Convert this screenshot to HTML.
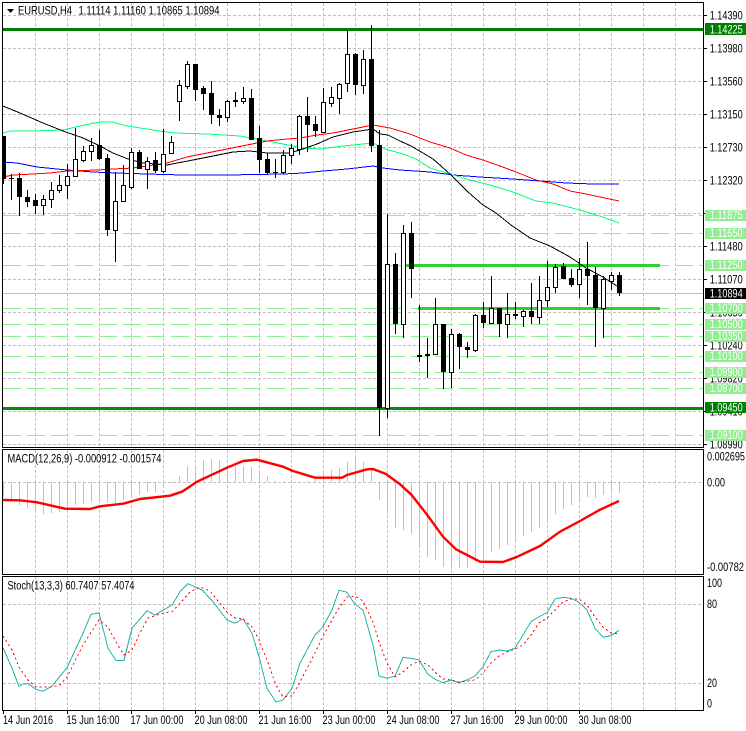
<!DOCTYPE html>
<html lang="en">
<head>
<meta charset="utf-8">
<title>EURUSD,H4</title>
<style>
html,body{margin:0;padding:0;background:#fff;width:746px;height:731px;overflow:hidden}
svg{display:block}
text{font-family:"Liberation Sans",Arial,sans-serif;font-size:11.5px;fill:#000}
.w text{fill:#fff}
.c{shape-rendering:crispEdges}
</style>
</head>
<body>
<svg width="746" height="731" viewBox="0 0 746 731" xmlns="http://www.w3.org/2000/svg">
<rect width="746" height="731" fill="#fff"/>

<!-- grid -->
<g fill="none" stroke="#c0c0c0" stroke-width="1" stroke-dasharray="3 2">
<path d="M35.5 3V447M67.5 3V447M99.5 3V447M131.5 3V447M163.5 3V447M195.5 3V447M227.5 3V447M259.5 3V447M291.5 3V447M323.5 3V447M355.5 3V447M387.5 3V447M419.5 3V447M451.5 3V447M483.5 3V447M515.5 3V447M547.5 3V447M579.5 3V447M611.5 3V447M643.5 3V447M675.5 3V447"/>
<path d="M35.5 450V574M67.5 450V574M99.5 450V574M131.5 450V574M163.5 450V574M195.5 450V574M227.5 450V574M259.5 450V574M291.5 450V574M323.5 450V574M355.5 450V574M387.5 450V574M419.5 450V574M451.5 450V574M483.5 450V574M515.5 450V574M547.5 450V574M579.5 450V574M611.5 450V574M643.5 450V574M675.5 450V574"/>
<path d="M35.5 577V710M67.5 577V710M99.5 577V710M131.5 577V710M163.5 577V710M195.5 577V710M227.5 577V710M259.5 577V710M291.5 577V710M323.5 577V710M355.5 577V710M387.5 577V710M419.5 577V710M451.5 577V710M483.5 577V710M515.5 577V710M547.5 577V710M579.5 577V710M611.5 577V710M643.5 577V710M675.5 577V710"/>
<path d="M3 15.5H703M3 48.5H703M3 81.5H703M3 114.5H703M3 147.5H703M3 180.5H703M3 213.5H703M3 246.5H703M3 279.5H703M3 312.5H703M3 345.5H703M3 378.5H703M3 411.5H703M3 444.5H703"/>
<path d="M3 482.5H703M3 604.5H703M3 683.5H703"/>
</g>

<!-- dashed light-green levels -->
<path fill="none" stroke="#90ee90" stroke-width="1" stroke-dasharray="18 6" d="M3 215.5H703M3 233.5H703M3 265.5H703M3 308.5H703M3 324.5H703M3 336.5H703M3 356.5H703M3 372.5H703M3 388.5H703M3 435.5H703"/>
<!-- current price -->
<path fill="none" stroke="#c0c0c0" d="M3 293.5H703"/>
<!-- thick segments -->
<path fill="none" stroke="#32cd32" stroke-width="3" d="M404 265.5H660M418 308.5H660"/>
<path fill="none" stroke="#008000" stroke-width="3" d="M3 29.5H704"/>
<path fill="none" stroke="#0a8a0a" stroke-width="3" d="M3 408.5H704"/>

<!-- moving averages -->
<g fill="none" class="c">
<polyline stroke="#0000ff" points="3,162 17,163 37,167 67,170 93,172 117,173 147,174 183,175 227,175 283,174 303,173 323,171 347,169 373,166 383,168 400,170 430,172 453,175 480,177 513,179 540,181 566,183 593,184 619,184"/>
<polyline stroke="#00ff7f" points="3,133 10,131 33,131 63,130 80,126 100,122 112,122 127,126 147,129 173,133 207,134 240,136 257,139 283,144 303,148 320,149 343,146 373,143 385,149 403,154 416,159 430,168 450,174 470,180 490,185 513,192 536,201 553,203 576,209 600,216 619,223"/>
<polyline stroke="#ff0000" points="3,177 13,175 33,174 50,173 67,171 97,170 113,169 133,168 147,166 167,163 187,157 207,153 227,149 247,145 267,141 287,139 300,138 317,135 333,133 353,129 373,125 390,128 410,134 430,142 450,148 466,155 483,160 500,166 516,172 536,180 553,184 570,191 586,194 600,197 619,201"/>
<polyline stroke="#000" points="3,106 20,113 43,123 63,131 83,138 100,146 113,153 128,159 143,163 167,165 193,160 213,156 233,152 250,151 267,153 290,153 303,149 317,144 333,137 353,132 373,129 380,134 388,135 400,141 411,146 423,153 433,159 441,166 451,175 468,192 483,205 496,213 511,225 530,238 550,246 570,257 586,268 603,277 620,288"/>
</g>

<!-- candles: wicks -->
<path fill="none" stroke="#000" d="M3.5 136V184M11.5 174V200M19.5 173V216M27.5 190V207M35.5 194V214M43.5 195V215M51.5 182V208M59.5 175V193M67.5 164V199M75.5 128V177M83.5 146V162M91.5 138V161M99.5 130V160M107.5 154V236M115.5 172V262M123.5 165V202M131.5 148V189M139.5 150V169M147.5 157V189M155.5 152V173M163.5 129V173M171.5 136V153M179.5 80V121M187.5 61V89M195.5 64V101M203.5 86V110M211.5 81V124M219.5 109V126M227.5 100V122M235.5 92V107M243.5 87V104M251.5 89V140M259.5 126V173M267.5 153V174M275.5 159V178M283.5 150V174M291.5 144V164M299.5 115V155M307.5 97V152M315.5 116V137M323.5 88V132M331.5 87V107M339.5 83V114M347.5 30V92M355.5 53V95M363.5 50V94M371.5 25V152M379.5 130V436M387.5 214V418M395.5 253V334M403.5 225V338M411.5 222V298M419.5 305V362M427.5 338V378M435.5 298V355M443.5 324V389M451.5 329V388M459.5 333V369M467.5 342V358M475.5 314V352M483.5 302V328M491.5 276V323M499.5 308V337M507.5 293V338M515.5 302V319M523.5 310V327M531.5 283V324M539.5 276V324M547.5 261V307M555.5 264V293M563.5 263V279M571.5 269V287M579.5 258V298M587.5 242V305M595.5 267V347M603.5 276V338M611.5 272V290M619.5 272V296"/>
<!-- candles: bearish bodies -->
<path fill="#000" d="M3 136h3v43h-3zM9 178h5v1h-5zM17 178h5v19h-5zM25 197h5v5h-5zM33 200h5v6h-5zM97 145h5v14h-5zM105 158h5v72h-5zM137 152h5v17h-5zM153 160h5v11h-5zM193 64h5v26h-5zM201 88h5v6h-5zM209 93h5v22h-5zM217 115h5v3h-5zM233 100h5v2h-5zM249 98h5v42h-5zM257 138h5v22h-5zM265 159h5v14h-5zM273 172h5v1h-5zM305 116h5v9h-5zM313 124h5v7h-5zM353 54h5v31h-5zM369 59h5v87h-5zM377 145h5v263h-5zM393 264h5v60h-5zM409 233h5v36h-5zM417 355h5v2h-5zM425 354h5v2h-5zM441 324h5v48h-5zM457 334h5v13h-5zM465 347h5v3h-5zM481 315h5v8h-5zM497 308h5v16h-5zM513 314h5v2h-5zM529 311h5v6h-5zM561 266h5v13h-5zM569 278h5v7h-5zM585 269h5v7h-5zM593 275h5v33h-5zM617 275h5v18h-5z"/>
<!-- candles: bullish bodies -->
<path fill="#fff" stroke="#000" d="M41.5 199.5h4v6h-4zM49.5 190.5h4v9h-4zM57.5 185.5h4v5h-4zM65.5 176.5h4v9h-4zM73.5 159.5h4v17h-4zM81.5 151.5h4v9h-4zM89.5 145.5h4v6h-4zM113.5 201.5h4v29h-4zM121.5 185.5h4v16h-4zM129.5 152.5h4v35h-4zM145.5 161.5h4v8h-4zM161.5 154.5h4v17h-4zM169.5 142.5h4v11h-4zM177.5 85.5h4v16h-4zM185.5 64.5h4v22h-4zM225.5 101.5h4v16h-4zM241.5 98.5h4v3h-4zM281.5 155.5h4v17h-4zM289.5 148.5h4v7h-4zM297.5 116.5h4v33h-4zM321.5 102.5h4v30h-4zM329.5 97.5h4v6h-4zM337.5 84.5h4v14h-4zM345.5 54.5h4v29h-4zM361.5 59.5h4v26h-4zM385.5 264.5h4v144h-4zM401.5 233.5h4v91h-4zM433.5 324.5h4v30h-4zM449.5 334.5h4v38h-4zM473.5 315.5h4v35h-4zM489.5 308.5h4v15h-4zM505.5 314.5h4v10h-4zM521.5 311.5h4v5h-4zM537.5 300.5h4v17h-4zM545.5 287.5h4v13h-4zM553.5 267.5h4v20h-4zM577.5 269.5h4v15h-4zM601.5 279.5h4v29h-4zM609.5 275.5h4v6h-4z"/>

<!-- MACD histogram -->
<path fill="none" stroke="#c0c0c0" d="M3.5 482V497M11.5 482V499M19.5 482V505M27.5 482V508M35.5 482V513M43.5 482V514M51.5 482V513M59.5 482V512M67.5 482V509M75.5 482V505M83.5 482V504M91.5 482V502M99.5 482V500M107.5 482V502M115.5 482V503M123.5 482V500M131.5 482V498M139.5 482V495M147.5 482V492M155.5 482V492M163.5 482V487M171.5 482V483M179.5 482V476M187.5 482V466M195.5 482V466M203.5 482V460M211.5 482V459M219.5 482V460M227.5 482V465M235.5 482V466M243.5 482V466M251.5 482V467M259.5 482V472M267.5 482V476M275.5 482V481M283.5 482V481M307.5 482V481M315.5 482V478M323.5 482V472M331.5 482V470M339.5 482V468M347.5 482V462M355.5 482V457M363.5 482V462M371.5 482V468M379.5 482V500M387.5 482V514M395.5 482V528M403.5 482V530M411.5 482V534M419.5 482V545M427.5 482V557M435.5 482V560M443.5 482V567M451.5 482V569M459.5 482V568M467.5 482V568M475.5 482V562M483.5 482V562M491.5 482V552M499.5 482V549M507.5 482V545M515.5 482V542M523.5 482V536M531.5 482V532M539.5 482V528M547.5 482V520M555.5 482V514M563.5 482V509M571.5 482V505M579.5 482V500M587.5 482V497M595.5 482V498M603.5 482V495M611.5 482V494M619.5 482V493"/>
<!-- MACD signal -->
<polyline fill="none" stroke="#ff0000" stroke-width="2.4" stroke-linejoin="round" points="3,500 20,500.3 37,502.3 50,505.3 65,508.7 90,509 100,506.3 123,503.7 140,499 170,495.7 182,491.7 197,481.7 227,467.7 243,461 257,459.7 283,466.7 293,471 315,477.7 342,477.7 347,475 367,469.3 373,469 386,474 400,484.3 411,494.3 426,513.3 443,536.7 456,549.3 480,561.7 503,562 516,557.3 540,546 560,531.7 580,521 600,509.7 619,501"/>

<!-- Stochastic -->
<polyline class="c" fill="none" stroke="#20b2aa" points="3,647.7 12,668.3 19,686.3 23,684 28,683.7 36,689.3 43,691.3 52,686 67,667.7 83,633.3 91,614.3 99,613 108,648.3 116,660.3 124,660.3 132,628.3 147,610.7 155,615 172,605 180,591.7 188,583.7 202,590 213,601.7 227,620 235,623.3 243,618.7 252,633.3 259,656.7 267,688.3 276,702 283,700 292,688.3 300,663.3 315,635 323,626.7 332,610 339,590.3 347,592.3 355,604.3 363,610 373,645 379,676 387,678.3 395,676 403,657.3 411,658.3 419,660 428,674.3 435,679.3 443,682.7 451,680 459,682.7 467,680 475,676 483,666.7 491,651.7 499,650 507,651 515,648.3 531,621.7 539,616.7 547,612.7 555,599 563,597.3 571,598.3 579,602.3 587,610 595,628.3 603,637.3 611,635.7 619,630.3"/>
<polyline class="c" fill="none" stroke="#ff0000" stroke-dasharray="2 3" points="3,636 12,650 19,667 28,680 36,687 43,687 52,687 60,685 67,677 83,645 99,620 108,627 116,642 124,655 132,650 140,633 148,618 157,615 173,611 190,592 200,587 210,591 227,612 235,618 243,619 252,627 259,640 267,660 276,685 283,697 292,696 300,682 315,653 323,636 332,620 339,608 347,597 355,596 363,601 373,622 379,642 387,663 395,677 403,672 411,665 419,661 428,665 435,672 443,679 451,680 459,682 467,681 475,680 483,673 491,663 499,656 507,652 515,649 523,645 531,635 539,623 547,618 555,610 563,602 571,599 579,599 587,605 595,617 603,627 611,633 619,634"/>

<!-- frames -->
<g fill="none" stroke="#000">
<path d="M2.5 2.5H703.5V447.5H2.5ZM2.5 449.5H703.5V574.5H2.5ZM2.5 576.5H703.5V710.5H2.5Z"/>
<path d="M704 15.5h3M704 48.5h3M704 81.5h3M704 114.5h3M704 147.5h3M704 180.5h3M704 213.5h3M704 246.5h3M704 279.5h3M704 312.5h3M704 345.5h3M704 378.5h3M704 411.5h3M704 444.5h3"/>
<path d="M3.5 711v3M67.5 711v3M131.5 711v3M195.5 711v3M259.5 711v3M323.5 711v3M387.5 711v3M451.5 711v3M515.5 711v3M579.5 711v3"/>
</g>

<!-- header -->
<path d="M7 9h7l-3.5 4z" fill="#000"/>
<text x="18" y="14.5" textLength="54" lengthAdjust="spacingAndGlyphs" style="font-size:12px">EURUSD,H4</text>
<text x="78.5" y="14.5" textLength="141" lengthAdjust="spacingAndGlyphs">1.11114 1.11160 1.10865 1.10894</text>
<text x="7.5" y="462.5" textLength="154" lengthAdjust="spacingAndGlyphs">MACD(12,26,9) -0.000912 -0.001574</text>
<text x="7.5" y="589.5" textLength="127" lengthAdjust="spacingAndGlyphs">Stoch(13,3,3) 60.7407 57.4074</text>

<!-- axis labels -->
<g>
<text x="709.7" y="19.5" textLength="33" lengthAdjust="spacingAndGlyphs">1.14390</text>
<text x="709.7" y="52.5" textLength="33" lengthAdjust="spacingAndGlyphs">1.13980</text>
<text x="709.7" y="85.5" textLength="33" lengthAdjust="spacingAndGlyphs">1.13560</text>
<text x="709.7" y="118.5" textLength="33" lengthAdjust="spacingAndGlyphs">1.13150</text>
<text x="709.7" y="151.5" textLength="33" lengthAdjust="spacingAndGlyphs">1.12730</text>
<text x="709.7" y="184.5" textLength="33" lengthAdjust="spacingAndGlyphs">1.12320</text>
<text x="709.7" y="250.5" textLength="33" lengthAdjust="spacingAndGlyphs">1.11480</text>
<text x="709.7" y="283.5" textLength="33" lengthAdjust="spacingAndGlyphs">1.11070</text>
<text x="709.7" y="316.5" textLength="33" lengthAdjust="spacingAndGlyphs">1.10650</text>
<text x="709.7" y="349.5" textLength="33" lengthAdjust="spacingAndGlyphs">1.10240</text>
<text x="709.7" y="382.5" textLength="33" lengthAdjust="spacingAndGlyphs">1.09820</text>
<text x="709.7" y="415.5" textLength="33" lengthAdjust="spacingAndGlyphs">1.09410</text>
<text x="709.7" y="448.5" textLength="33" lengthAdjust="spacingAndGlyphs">1.08990</text>
<text x="707" y="460.5" textLength="38" lengthAdjust="spacingAndGlyphs">0.002695</text>
<text x="707" y="486.5" textLength="18" lengthAdjust="spacingAndGlyphs">0.00</text>
<text x="707" y="571" textLength="37" lengthAdjust="spacingAndGlyphs">-0.00782</text>
<text x="707" y="587" textLength="15" lengthAdjust="spacingAndGlyphs">100</text>
<text x="707" y="608" textLength="10" lengthAdjust="spacingAndGlyphs">80</text>
<text x="707" y="687" textLength="10" lengthAdjust="spacingAndGlyphs">20</text>
<text x="707" y="707.5" textLength="5" lengthAdjust="spacingAndGlyphs">0</text>
</g>

<!-- level label boxes -->
<g fill="#90ee90">
<rect x="705" y="210" width="41" height="11"/>
<rect x="705" y="228" width="41" height="11"/>
<rect x="705" y="260" width="41" height="11"/>
<rect x="705" y="303" width="41" height="11"/>
<rect x="705" y="319" width="41" height="11"/>
<rect x="705" y="331" width="41" height="11"/>
<rect x="705" y="351" width="41" height="11"/>
<rect x="705" y="367" width="41" height="11"/>
<rect x="705" y="383" width="41" height="11"/>
<rect x="705" y="430" width="41" height="11"/>
</g>
<rect x="705" y="23" width="41" height="12" fill="#008000"/>
<rect x="705" y="402" width="41" height="11" fill="#008000"/>
<rect x="705" y="288" width="41" height="11" fill="#000"/>
<g class="w">
<text x="709.7" y="33.5" textLength="33" lengthAdjust="spacingAndGlyphs">1.14225</text>
<text x="709.7" y="219" textLength="33" lengthAdjust="spacingAndGlyphs">1.11875</text>
<text x="709.7" y="237" textLength="33" lengthAdjust="spacingAndGlyphs">1.11650</text>
<text x="709.7" y="269" textLength="33" lengthAdjust="spacingAndGlyphs">1.11250</text>
<text x="709.7" y="297.5" textLength="33" lengthAdjust="spacingAndGlyphs">1.10894</text>
<text x="709.7" y="312" textLength="33" lengthAdjust="spacingAndGlyphs">1.10700</text>
<text x="709.7" y="328" textLength="33" lengthAdjust="spacingAndGlyphs">1.10500</text>
<text x="709.7" y="340" textLength="33" lengthAdjust="spacingAndGlyphs">1.10350</text>
<text x="709.7" y="360" textLength="33" lengthAdjust="spacingAndGlyphs">1.10100</text>
<text x="709.7" y="376" textLength="33" lengthAdjust="spacingAndGlyphs">1.09900</text>
<text x="709.7" y="392" textLength="33" lengthAdjust="spacingAndGlyphs">1.09700</text>
<text x="709.7" y="411.5" textLength="33" lengthAdjust="spacingAndGlyphs">1.09450</text>
<text x="709.7" y="439" textLength="33" lengthAdjust="spacingAndGlyphs">1.09100</text>
</g>

<!-- time axis -->
<text x="3" y="724" textLength="50" lengthAdjust="spacingAndGlyphs">14 Jun 2016</text>
<text x="66.5" y="724" textLength="53" lengthAdjust="spacingAndGlyphs">15 Jun 16:00</text>
<text x="130.5" y="724" textLength="53" lengthAdjust="spacingAndGlyphs">17 Jun 00:00</text>
<text x="194.5" y="724" textLength="53" lengthAdjust="spacingAndGlyphs">20 Jun 08:00</text>
<text x="258.5" y="724" textLength="53" lengthAdjust="spacingAndGlyphs">21 Jun 16:00</text>
<text x="322.5" y="724" textLength="53" lengthAdjust="spacingAndGlyphs">23 Jun 00:00</text>
<text x="386.5" y="724" textLength="53" lengthAdjust="spacingAndGlyphs">24 Jun 08:00</text>
<text x="450.5" y="724" textLength="53" lengthAdjust="spacingAndGlyphs">27 Jun 16:00</text>
<text x="514.5" y="724" textLength="53" lengthAdjust="spacingAndGlyphs">29 Jun 00:00</text>
<text x="578.5" y="724" textLength="53" lengthAdjust="spacingAndGlyphs">30 Jun 08:00</text>
</svg>
</body>
</html>
